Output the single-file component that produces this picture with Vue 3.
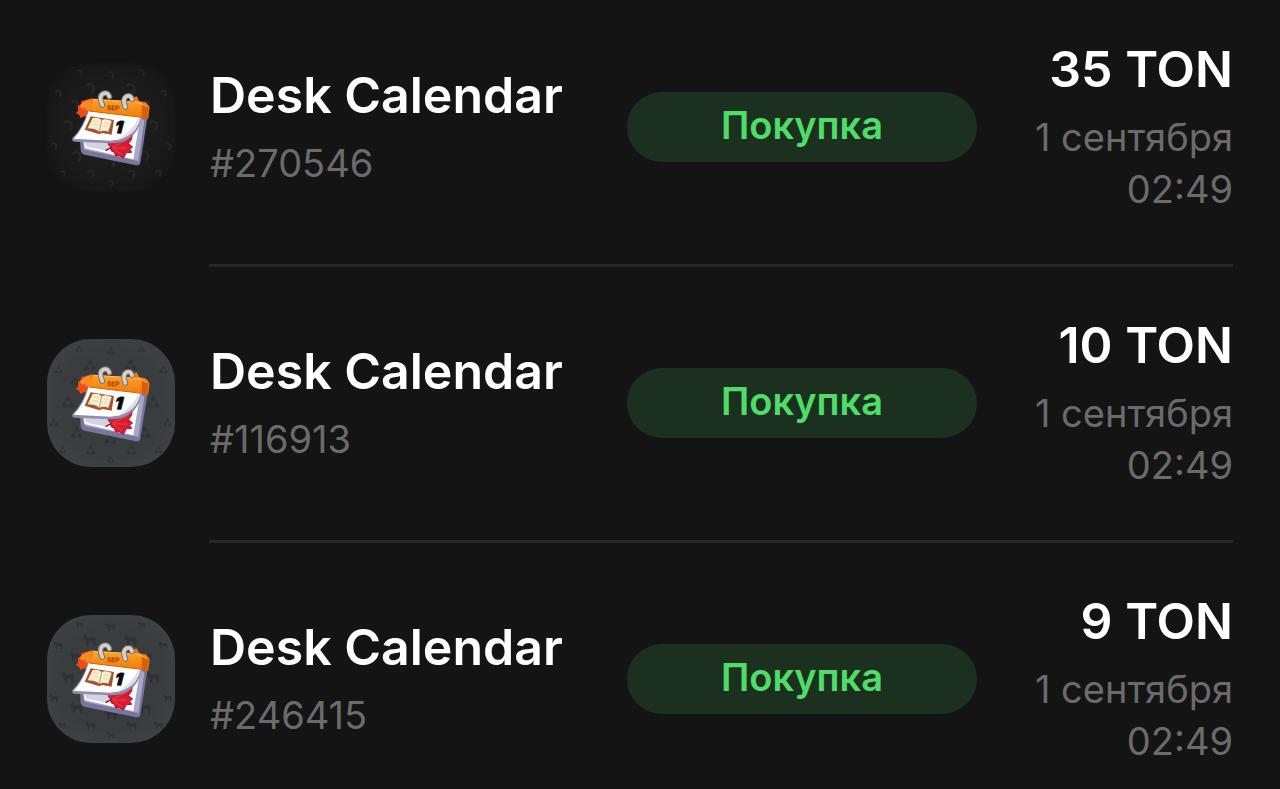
<template>
  <main class="history">
    <ul class="list">
      <li v-for="item in items" :key="item.number" class="row">
        <div class="content">
          <svg class="avatar" viewBox="21 21 384 384" role="img" :aria-label="item.title">
            <defs>
              <radialGradient :id="`bg-${item.number}`" cx="50%" cy="50%" r="68%">
                <stop offset="0" :stop-color="item.colors[0]" />
                <stop offset="0.6" :stop-color="item.colors[1]" />
                <stop offset="1" :stop-color="item.colors[2]" />
              </radialGradient>
              <linearGradient :id="`cover-${item.number}`" x1="0" y1="0" x2="0" y2="1">
                <stop offset="0" stop-color="#ffa22a" />
                <stop offset="1" stop-color="#f27c08" />
              </linearGradient>
            </defs>

            <rect x="21" y="21" width="384" height="384" rx="132" :fill="`url(#bg-${item.number})`" />

            <!-- Backdrop symbols -->
            <g :fill="item.symbolColor">
              <path
                v-for="(spot, index) in spots"
                :key="index"
                :d="symbols[item.symbol]"
                :transform="`translate(${spot[0]} ${spot[1]}) scale(${spot[2]})`"
              />
            </g>

            <!-- Leaves behind the calendar -->
            <path d="M158 126 L140 131 L123 136 L126 142 L114 150 L114 164 L108 171 L118 177 L121 186 L133 181 L146 183 Z" fill="#ef4a17" />
            <path d="M156 128 L138 134 L124 142 L120 152 L130 160 L138 152 L136 164 L149 160 Z" fill="#ff8a23" />
            <path d="M276 126 L290 121 L298 136 L318 139 L329 153 L325 186 L316 194 L300 180 Z" fill="#ee7510" />

            <!-- Page block -->
            <path d="M120 250 L304 178 L321 193 L301 320 Q299 329 288 328 L134 296 Q122 292 122 281 Z" fill="#79769b" />
            <path d="M126 246 L294 180 L313 194 L295 315 L134 281 Z" fill="#aaa6c8" />
            <path d="M130 248 L300 190 L280 310 L134 276 Z" fill="#fdfcff" />
            <path d="M132 254 L200 258 L208 268 L202 285 L140 272 Z" fill="#d5d2e4" />

            <!-- Maple leaf -->
            <path d="M211 273 L204 263 L219 260 L231 256 L242 256 L258 243 L277 237 L274 251 L265 263 L278 273 L269 280 L275 289 L259 290 L250 307 L238 299 L227 300 L223 289 L214 285 Z" fill="#d81c33" stroke="#b0132c" stroke-width="3" stroke-linejoin="round" />
            <path d="M215 275 L266 249 M218 276 L262 276 M220 277 L246 297" fill="none" stroke="#ea4148" stroke-width="3" />
            <path d="M198 283 L213 275" stroke="#7d1420" stroke-width="4" stroke-linecap="round" />

            <!-- Top sheet -->
            <path d="M144 162 L306 182 Q297 231 265 248 Q248 260 211 262 L107 257 Q92 256 98 245 Q128 218 144 162 Z" fill="#8f8cae" />
            <path d="M147 162 L303 181 Q293 226 262 240 Q243 252 211 254 L101 248 Q132 217 147 162 Z" fill="#ffffff" />
            <path d="M303 183 Q291 224 262 240 Q246 249 228 252 Q279 228 296 182 Z" fill="#dedbea" />

            <!-- Orange header -->
            <path d="M158 128 L299 137 Q306 139 306 146 L305 184 L147 165 Z" :fill="`url(#cover-${item.number})`" />
            <path d="M306 144 L325 154 L322 191 L305 183 Z" fill="#d65f0b" />
            <path d="M160 130 L296 139 L321 151" fill="none" stroke="#ffc057" stroke-width="3" />
            <path d="M147 165 L305 184" stroke="#cf6207" stroke-width="3" />
            <text class="month" x="200" y="162" transform="rotate(2 200 162)">SEP</text>

            <!-- Binder rings -->
            <g fill="none" stroke-linecap="round">
              <path d="M187 147 Q175 121 189 113 Q203 107 208 122" stroke="#77716e" stroke-width="17" />
              <path d="M187 147 Q175 121 189 113 Q203 107 208 122" stroke="#d5d0cc" stroke-width="11" />
              <path d="M256 153 Q246 129 259 121 Q272 115 276 130" stroke="#77716e" stroke-width="17" />
              <path d="M256 153 Q246 129 259 121 Q272 115 276 130" stroke="#d5d0cc" stroke-width="11" />
            </g>

            <!-- Open book -->
            <path d="M152 181 L222 192 L215 236 L187 231 L178 235 L134 221 Z" fill="#a65332" />
            <path d="M158 186 Q176 183 185 192 Q199 187 215 195 L205 227 Q190 221 178 227 Q164 217 143 217 Z" fill="#f8edcf" />
            <path d="M185 192 L178 227" stroke="#b99c75" stroke-width="3" />
            <path d="M161 194 L177 198 M157 204 L174 208 M191 201 L206 203 M188 211 L202 213" stroke="#ddcaa2" stroke-width="2" />
            <text class="day" x="224" y="230" transform="rotate(5 224 230)">1</text>
          </svg>

          <div class="info">
            <h2 class="title">{{ item.title }}</h2>
            <span class="muted">#{{ item.number }}</span>
          </div>

          <span class="badge">Покупка</span>

          <div class="deal">
            <strong class="title">{{ item.price }} TON</strong>
            <time class="muted" datetime="09-01T02:49">
              <span>1 сентября</span>
              <span>02:49</span>
            </time>
          </div>
        </div>
        <hr v-if="item !== items[items.length - 1]" class="divider" />
      </li>
    </ul>
  </main>
</template>

<script setup>
const items = [
  {
    title: 'Desk Calendar',
    number: '270546',
    price: 35,
    symbol: 'hook',
    colors: ['#222223', '#1a1a1b', '#131313'],
    symbolColor: '#262728'
  },
  {
    title: 'Desk Calendar',
    number: '116913',
    price: 10,
    symbol: 'triangles',
    colors: ['#383c3f', '#393d40', '#404548'],
    symbolColor: '#2e3235'
  },
  {
    title: 'Desk Calendar',
    number: '246415',
    price: 9,
    symbol: 'goat',
    colors: ['#383c3f', '#393d40', '#404548'],
    symbolColor: '#2e3235'
  }
]

const symbols = {
  hook: 'M-15 -8 Q-8 -20 5 -14 Q18 -7 14 8 L8 17 L1 13 L7 3 Q8 -5 0 -8 Q-7 -9 -10 -3 Z',
  triangles: 'M0 -18 L9 -2 L-9 -2 Z M-10 0 L-1 16 L-19 16 Z M10 0 L19 16 L1 16 Z',
  goat: 'M-18 -13 L-12 -17 L-7 -7 L12 -9 L18 -4 L16 16 L11 16 L9 3 L-3 3 L-5 16 L-10 16 L-11 0 L-20 -4 Z'
}

// x, y and scale of every backdrop symbol
const spots = [
  [212, 56, 0.7], [118, 50, 0.6], [305, 50, 0.6],
  [150, 97, 1], [272, 97, 1],
  [55, 112, 0.7], [370, 112, 0.7],
  [105, 145, 0.8], [320, 145, 0.8],
  [84, 208, 1], [340, 208, 1],
  [42, 270, 0.7], [383, 270, 0.7],
  [110, 300, 1], [314, 300, 1],
  [212, 318, 1],
  [68, 352, 0.6], [355, 352, 0.7],
  [152, 353, 0.8], [275, 353, 0.8],
  [212, 381, 0.6]
]
</script>

<style>
body {
  margin: 0;
  background: #141414;
}
</style>

<style scoped>
.history {
  min-height: 100vh;
  box-sizing: border-box;
  padding: 39px 47px 0;
  background: #141414;
  color: #ffffff;
  font-family: Inter, "Liberation Sans", sans-serif;
}

.list {
  margin: 0;
  padding: 0;
  list-style: none;
}

.row + .row {
  padding-top: 48px;
}

.content {
  display: grid;
  grid-template-columns: 128px 1fr 350px 256px;
  align-items: center;
}

.avatar {
  display: block;
  width: 128px;
  height: 128px;
}

.month {
  font-size: 20px;
  font-weight: 800;
  fill: #a94b0b;
}

.day {
  font-size: 50px;
  font-style: italic;
  font-weight: 900;
  fill: #0c0c0c;
  stroke: #0c0c0c;
  stroke-width: 3px;
}

.info,
.deal {
  display: flex;
  flex-direction: column;
  gap: 12px;
}

.info {
  padding-left: 35px;
}

.deal {
  align-items: flex-end;
  white-space: nowrap;
}

.title {
  margin: 0;
  font-size: 50px;
  font-weight: 600;
  line-height: 60px;
}

.muted {
  color: #6b6b6b;
  font-size: 38px;
  line-height: 52px;
}

.deal .muted {
  display: flex;
  flex-direction: column;
  align-items: flex-end;
}

.badge {
  padding-bottom: 4px;
  border-radius: 35px;
  background: #1c3020;
  color: #4fdc69;
  font-size: 38px;
  font-weight: 600;
  line-height: 66px;
  text-align: center;
}

.divider {
  height: 3px;
  margin: 49px 0 0 162px;
  border: 0;
  background: #272727;
}
</style>
